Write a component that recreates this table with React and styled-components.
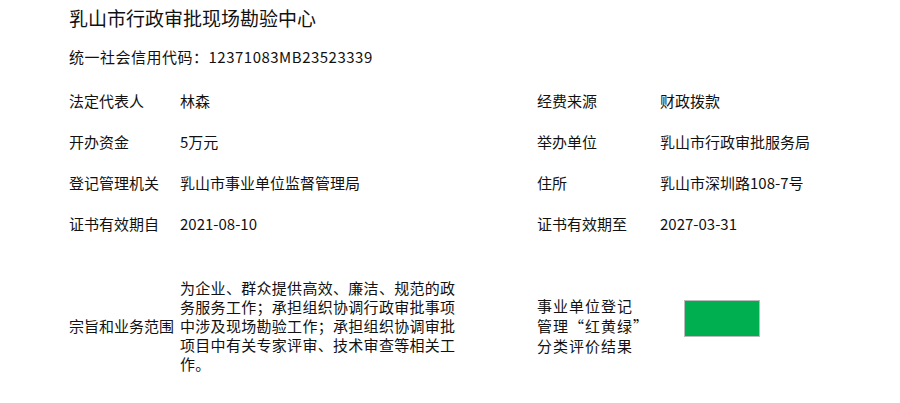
import React from 'react';
import styled, {createGlobalStyle} from 'styled-components';

const GlobalStyle = createGlobalStyle`
  body {
    margin: 0;
    background: #fff;
    font-family: "Noto Sans CJK SC", "Microsoft YaHei", sans-serif;
    color: #111;
  }
`;

const info = [
  ['法定代表人', '林森', '经费来源', '财政拨款'],
  ['开办资金', '5万元', '举办单位', '乳山市行政审批服务局'],
  ['登记管理机关', '乳山市事业单位监督管理局', '住所', '乳山市深圳路108-7号'],
  ['证书有效期自', '2021-08-10', '证书有效期至', '2027-03-31'],
];

const scope = '为企业、群众提供高效、廉洁、规范的政务服务工作；承担组织协调行政审批事项中涉及现场勘验工作；承担组织协调审批项目中有关专家评审、技术审查等相关工作。';

const App = () => {
  return (
    <Page>
      <GlobalStyle/>
      <Title>乳山市行政审批现场勘验中心</Title>
      <Code>统一社会信用代码：12371083MB23523339</Code>
      <Grid>
        {info.map((row, i) => (
          <React.Fragment key={i}>
            <Label>{row[0]}</Label>
            <Value>{row[1]}</Value>
            <Label>{row[2]}</Label>
            <Value>{row[3]}</Value>
          </React.Fragment>
        ))}
      </Grid>
      <Bottom>
        <ScopeLabel>宗旨和业务范围</ScopeLabel>
        <Scope>{scope}</Scope>
        <RatingLabel>事业单位登记<br/>管理“红黄绿”<br/>分类评价结果</RatingLabel>
        <RatingBox color="#00b050"/>
      </Bottom>
    </Page>
  );
};

export default App;

const Page = styled.div`
  width: 900px;
  height: 403px;
  box-sizing: border-box;
  padding: 6px 0 0 69px;
  overflow: hidden;
`;

const Title = styled.div`
  font-size: 19px;
  line-height: 24px;
  height: 24px;
`;

const Code = styled.div`
  font-size: 15px;
  line-height: 20px;
  margin-top: 17px;
  letter-spacing: 0.5px;
`;

const Grid = styled.div`
  display: grid;
  grid-template-columns: 111px 357px 123px 1fr;
  grid-auto-rows: 41px;
  align-items: center;
  margin-top: 13px;
  font-size: 15px;
`;

const Label = styled.div`
  white-space: nowrap;
`;

const Value = styled.div`
  font-size: 15px;
  white-space: nowrap;
`;

const Bottom = styled.div`
  display: grid;
  grid-template-columns: 111px 357px 147px 1fr;
  align-items: center;
  margin-top: 34px;
  font-size: 15px;
`;

const ScopeLabel = styled.div`
  white-space: nowrap;
`;

const Scope = styled.div`
  width: 280px;
  line-height: 19px;
  letter-spacing: 0.3px;
`;

const RatingLabel = styled.div`
  line-height: 20px;
  letter-spacing: 1px;
`;

const RatingBox = styled.div`
  width: 74px;
  height: 35px;
  margin-bottom: 14px;
  background: ${p => p.color};
  border: 1px solid #bbb;
`;
